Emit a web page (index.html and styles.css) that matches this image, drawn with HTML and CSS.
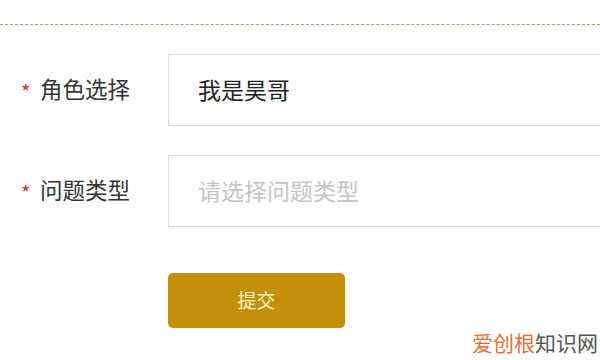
FILE: index.html
```html
<!DOCTYPE html>
<html lang="zh">
<head>
<meta charset="utf-8">
<link rel="stylesheet" href="styles.css">
</head>
<body>
<div class="page">
  <div class="divider"></div>
  <form class="form">
    <div class="row">
      <label class="label"><span class="star">*</span>角色选择</label>
      <div class="field"><span class="value">我是昊哥</span></div>
    </div>
    <div class="row">
      <label class="label"><span class="star">*</span>问题类型</label>
      <div class="field"><span class="placeholder">请选择问题类型</span></div>
    </div>
    <div class="row actions">
      <div></div>
      <button type="button" class="submit">提交</button>
    </div>
  </form>
  <div class="watermark"><span class="wm-a">爱创根</span><span class="wm-b">知识网</span></div>
</div>
</body>
</html>
```
FILE: styles.css
```css
* { box-sizing: border-box; }
html, body { margin: 0; padding: 0; background: #fff; }
body {
  font-family: "Noto Sans CJK SC", "Noto Sans", sans-serif;
  width: 600px;
  height: 360px;
  overflow: hidden;
}
.page { position: relative; width: 600px; height: 360px; padding-top: 24px; }
.divider { border-top: 1px dashed #a3a36a; height: 0; }
.form { display: flex; flex-direction: column; gap: 29px; padding-top: 29px; }
.row { display: grid; grid-template-columns: 168px 1fr; align-items: center; }
.label {
  display: flex; align-items: center;
  padding-left: 21px;
  font-size: 22.5px; color: #333;
  margin-top: -4px;
}
.star { color: #c0392b; font-size: 20px; width: 19px; margin-top: 6px; }
.field {
  height: 72px;
  border: 1px solid #dcdcdc;
  border-right: none;
  display: flex; align-items: center;
  padding-left: 29px;
  font-size: 23px;
}
.field span { margin-top: -3px; }
.value { color: #222; }
.placeholder { color: #c4c4c4; }
.actions { margin-top: 17px; }
.submit {
  width: 177px; height: 55px;
  background: #c28f06;
  border: none; border-radius: 5px;
  color: #fff5c8;
  font-family: inherit;
  font-size: 19px;
  padding: 0 0 3px;
}
.watermark {
  position: absolute; right: 2px; bottom: 7px;
  font-size: 21px; line-height: 1;
}
.wm-a { color: #e2703a; }
.wm-b { color: #555; }
```
